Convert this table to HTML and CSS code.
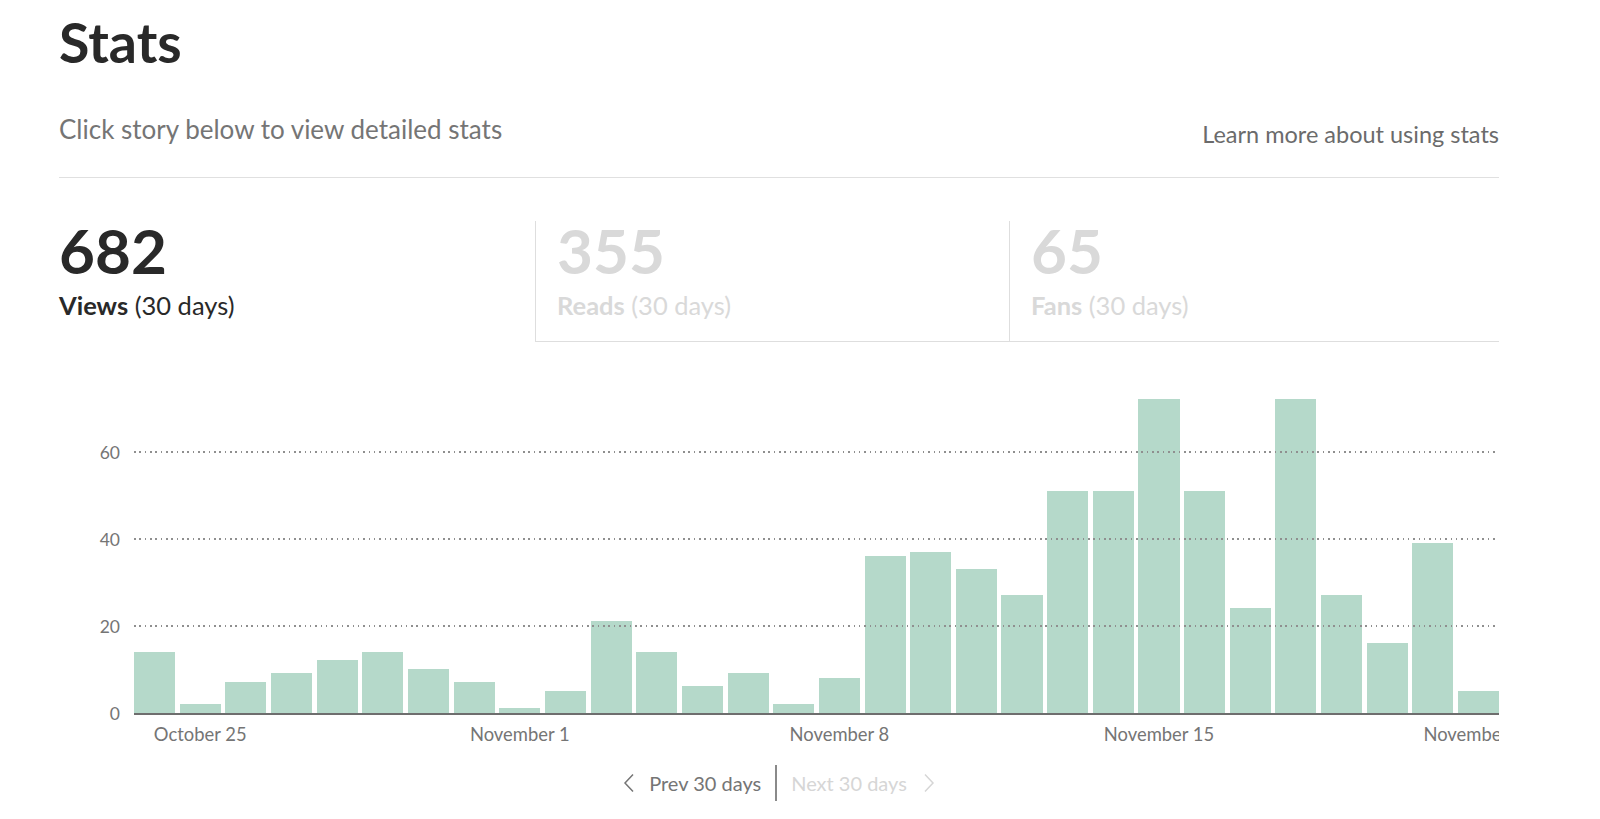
FILE: index.html
```html
<!DOCTYPE html>
<html lang="en">
<head>
<meta charset="utf-8">
<title>Stats</title>
<link rel="stylesheet" href="styles.css">
</head>
<body>
<div class="page">
  <h1 class="title">Stats</h1>
  <div class="header-row">
    <p class="subtitle">Click story below to view detailed stats</p>
    <a class="learn" href="#">Learn more about using stats</a>
  </div>

  <div class="cards">
    <div class="card card-active">
      <div class="num">682</div>
      <div class="label"><b>Views</b> (30 days)</div>
    </div>
    <div class="card card-idle">
      <div class="num">355</div>
      <div class="label"><b>Reads</b> (30 days)</div>
    </div>
    <div class="card card-idle">
      <div class="num">65</div>
      <div class="label"><b>Fans</b> (30 days)</div>
    </div>
  </div>

  <div class="chart">
    <div class="yaxis">
      <div class="tick"><span>60</span></div>
      <div class="tick"><span>40</span></div>
      <div class="tick"><span>20</span></div>
      <div class="tick tick-zero"><span>0</span></div>
    </div>
    <div class="plot-col">
      <div class="plot">
        <div class="bars">
          <div class="bar" style="--v:14"></div>
          <div class="bar" style="--v:2"></div>
          <div class="bar" style="--v:7"></div>
          <div class="bar" style="--v:9"></div>
          <div class="bar" style="--v:12"></div>
          <div class="bar" style="--v:14"></div>
          <div class="bar" style="--v:10"></div>
          <div class="bar" style="--v:7"></div>
          <div class="bar" style="--v:1"></div>
          <div class="bar" style="--v:5"></div>
          <div class="bar" style="--v:21"></div>
          <div class="bar" style="--v:14"></div>
          <div class="bar" style="--v:6"></div>
          <div class="bar" style="--v:9"></div>
          <div class="bar" style="--v:2"></div>
          <div class="bar" style="--v:8"></div>
          <div class="bar" style="--v:36"></div>
          <div class="bar" style="--v:37"></div>
          <div class="bar" style="--v:33"></div>
          <div class="bar" style="--v:27"></div>
          <div class="bar" style="--v:51"></div>
          <div class="bar" style="--v:51"></div>
          <div class="bar" style="--v:72"></div>
          <div class="bar" style="--v:51"></div>
          <div class="bar" style="--v:24"></div>
          <div class="bar" style="--v:72"></div>
          <div class="bar" style="--v:27"></div>
          <div class="bar" style="--v:16"></div>
          <div class="bar" style="--v:39"></div>
          <div class="bar" style="--v:5"></div>
        </div>
        <div class="gridline" style="--v:20"></div>
        <div class="gridline" style="--v:40"></div>
        <div class="gridline" style="--v:60"></div>
      </div>
      <div class="xlabels">
        <div class="xcell"></div>
        <div class="xcell"><span>October 25</span></div>
        <div class="xcell"></div><div class="xcell"></div><div class="xcell"></div>
        <div class="xcell"></div><div class="xcell"></div><div class="xcell"></div>
        <div class="xcell"><span>November 1</span></div>
        <div class="xcell"></div><div class="xcell"></div><div class="xcell"></div>
        <div class="xcell"></div><div class="xcell"></div><div class="xcell"></div>
        <div class="xcell"><span>November 8</span></div>
        <div class="xcell"></div><div class="xcell"></div><div class="xcell"></div>
        <div class="xcell"></div><div class="xcell"></div><div class="xcell"></div>
        <div class="xcell"><span>November 15</span></div>
        <div class="xcell"></div><div class="xcell"></div><div class="xcell"></div>
        <div class="xcell"></div><div class="xcell"></div><div class="xcell"></div>
        <div class="xcell"><span>November 22</span></div>
      </div>
    </div>
  </div>

  <nav class="pager">
    <a class="pager-link pager-prev" href="#">
      <svg class="chev" width="12" height="20" viewBox="0 0 12 20"><path d="M10 1.5 L2 10 L10 18.5"/></svg>
      <span>Prev 30 days</span>
    </a>
    <span class="pager-sep"></span>
    <span class="pager-link pager-next">
      <span>Next 30 days</span>
      <svg class="chev" width="12" height="20" viewBox="0 0 12 20"><path d="M2 1.5 L10 10 L2 18.5"/></svg>
    </span>
  </nav>
</div>
</body>
</html>
```

FILE: styles.css
```css
* { box-sizing: border-box; }

html, body {
  margin: 0;
  padding: 0;
  background: #ffffff;
}

body {
  font-family: Lato, "Noto Sans", "Liberation Sans", sans-serif;
  color: #292929;
}

.page {
  width: 1440px;
  margin-left: 59px;
  padding-top: 15px;
}

.title {
  margin: 0;
  font-size: 55.5px;
  line-height: 54px;
  font-weight: 700;
  color: #292929;
}

.header-row {
  margin-top: 45px;
  display: flex;
  justify-content: space-between;
  align-items: flex-start;
  padding-bottom: 30px;
  border-bottom: 1px solid #e0e0e0;
}

.subtitle {
  margin: 0;
  font-size: 26px;
  line-height: 30px;
  color: #757575;
}

.learn {
  margin-top: 7px;
  font-size: 23.5px;
  line-height: 26px;
  color: #6b6b6b;
  text-decoration: none;
}

.cards {
  margin-top: 43px;
  display: grid;
  grid-template-columns: 476px 474px 1fr;
}

.card {
  padding-top: 2.5px;
  padding-bottom: 22px;
  border-bottom: 1px solid transparent;
}

.card-idle {
  border-left: 1px solid #dedede;
  border-bottom-color: #dedede;
  padding-left: 21px;
  color: #d9d9d9;
}

.num {
  font-size: 62px;
  line-height: 52px;
  font-weight: 700;
}

.label {
  margin-top: 15px;
  font-size: 25.5px;
  line-height: 28px;
  font-weight: 400;
}

.label b { font-weight: 700; }

.chart {
  margin-top: 51px;
  display: flex;
}

.yaxis {
  width: 75px;
  height: 321px;
  padding-right: 14px;
  display: flex;
  flex-direction: column;
  justify-content: flex-end;
  align-items: stretch;
  font-size: 17.5px;
  color: #757575;
}

.tick {
  height: 87px;
  text-align: right;
}

.tick span {
  display: block;
  line-height: 20px;
  margin-top: -10px;
}

.tick-zero { height: 0; }

.plot-col {
  flex: 1;
  min-width: 0;
  overflow: hidden;
}

.plot {
  position: relative;
}

.bars {
  height: 322px;
  display: flex;
  align-items: flex-end;
  gap: 4.6px;
  border-bottom: 2px solid #6e6e6e;
}

.bar {
  flex: 1;
  min-width: 0;
  height: calc(var(--v) * 4.35px);
  background: #b5d9ca;
}

.gridline {
  position: absolute;
  left: 0;
  right: 4px;
  bottom: calc(var(--v) * 4.35px + 1px);
  height: 2px;
  background-image: repeating-linear-gradient(to right, #8f8f8f 0 1.6px, transparent 1.6px 5.33px);
  z-index: 1;
}

.xlabels {
  margin-top: 8px;
  display: flex;
  gap: 4.6px;
  font-size: 18.4px;
  line-height: 22px;
  color: #757575;
}

.xcell {
  flex: 1;
  min-width: 0;
  display: flex;
  justify-content: center;
  white-space: nowrap;
}

.pager {
  margin-top: 20px;
  display: flex;
  justify-content: center;
  align-items: center;
  font-size: 20px;
  line-height: 24px;
}

.pager-link {
  display: flex;
  align-items: center;
  text-decoration: none;
}

.pager-prev {
  gap: 14px;
  padding-right: 14px;
  color: #757575;
}

.pager-next {
  gap: 16px;
  padding-left: 14px;
  color: #d6d6d6;
}

.chev path {
  fill: none;
  stroke: currentColor;
  stroke-width: 1.5;
}

.pager-sep {
  width: 2px;
  height: 36px;
  background: #8a8a8a;
}
```
